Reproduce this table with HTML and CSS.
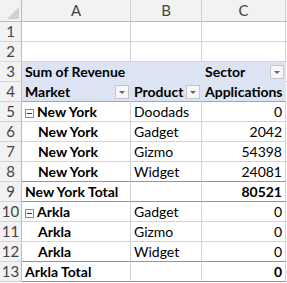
FILE: index.html
```html
<!DOCTYPE html>
<html lang="en">
<head>
    <meta charset="UTF-8">
    <title>Pivot Table</title>
    <link rel="stylesheet" href="styles.css">
</head>
<body>
    <div class="sheet">
        <!-- column headers -->
        <div class="corner"><span class="corner-tri"></span></div>
        <div class="col-head">A</div>
        <div class="col-head">B</div>
        <div class="col-head">C</div>
        <div class="col-head edge"></div>

        <div class="row-head">1</div>
        <div class="cell"></div><div class="cell"></div><div class="cell"></div><div class="cell edge"></div>

        <div class="row-head">2</div>
        <div class="cell"></div><div class="cell"></div><div class="cell"></div><div class="cell edge"></div>

        <div class="row-head">3</div>
        <div class="cell pv-head bold spill">Sum of Revenue</div>
        <div class="cell pv-head"></div>
        <div class="cell pv-head bold split">Sector <span class="drop"></span></div>
        <div class="cell edge"></div>

        <div class="row-head">4</div>
        <div class="cell pv-head pv-last bold split">Market <span class="drop"></span></div>
        <div class="cell pv-head pv-last bold split">Product <span class="drop"></span></div>
        <div class="cell pv-head pv-last bold">Applications</div>
        <div class="cell edge"></div>

        <div class="row-head">5</div>
        <div class="cell bold"><span class="minus"></span>New York</div>
        <div class="cell">Doodads</div>
        <div class="cell num">0</div>
        <div class="cell edge"></div>

        <div class="row-head">6</div>
        <div class="cell bold indent">New York</div>
        <div class="cell">Gadget</div>
        <div class="cell num">2042</div>
        <div class="cell edge"></div>

        <div class="row-head">7</div>
        <div class="cell bold indent">New York</div>
        <div class="cell">Gizmo</div>
        <div class="cell num">54398</div>
        <div class="cell edge"></div>

        <div class="row-head">8</div>
        <div class="cell bold indent before-total">New York</div>
        <div class="cell before-total">Widget</div>
        <div class="cell num before-total">24081</div>
        <div class="cell edge"></div>

        <div class="row-head">9</div>
        <div class="cell bold total">New York Total</div>
        <div class="cell total"></div>
        <div class="cell num bold total">80521</div>
        <div class="cell edge"></div>

        <div class="row-head">10</div>
        <div class="cell bold"><span class="minus"></span>Arkla</div>
        <div class="cell">Gadget</div>
        <div class="cell num">0</div>
        <div class="cell edge"></div>

        <div class="row-head">11</div>
        <div class="cell bold indent">Arkla</div>
        <div class="cell">Gizmo</div>
        <div class="cell num">0</div>
        <div class="cell edge"></div>

        <div class="row-head">12</div>
        <div class="cell bold indent before-total">Arkla</div>
        <div class="cell before-total">Widget</div>
        <div class="cell num before-total">0</div>
        <div class="cell edge"></div>

        <div class="row-head">13</div>
        <div class="cell bold total">Arkla Total</div>
        <div class="cell total"></div>
        <div class="cell num bold total">0</div>
        <div class="cell edge"></div>
    </div>
</body>
</html>
```

FILE: styles.css
```css
body {
    margin: 0;
    background-color: #ffffff;
    font-family: Lato, "Liberation Sans", sans-serif;
    font-size: 14px;
    color: #000;
}
.sheet {
    display: grid;
    grid-template-columns: 22px 109px 71px 84px 1fr;
    grid-template-rows: 22px repeat(13, 20px);
}
.sheet > div {
    box-sizing: border-box;
    border-right: 1px solid #d4d4d4;
    border-bottom: 1px solid #d4d4d4;
    white-space: nowrap;
    overflow: hidden;
}
.sheet > .spill {
    overflow: visible;
    position: relative;
    z-index: 1;
}
.corner {
    background-color: #f2f2f2;
    position: relative;
    border-color: #bdbdbd !important;
}
.corner-tri {
    position: absolute;
    right: 2px;
    bottom: 2px;
    width: 0;
    height: 0;
    border-left: 12px solid transparent;
    border-bottom: 12px solid #d2d2d2;
}
.col-head {
    background-color: #f2f2f2;
    color: #444;
    text-align: center;
    line-height: 21px;
    font-size: 15px;
    border-bottom-color: #bdbdbd !important;
    border-right-color: #d0d0d0 !important;
}
.row-head {
    background-color: #f2f2f2;
    color: #444;
    text-align: center;
    line-height: 19px;
    font-size: 15px;
    border-right-color: #bdbdbd !important;
}
.col-head.edge {
    border-right: none;
}
.cell {
    line-height: 19px;
    padding: 0 3px;
}
.cell.edge {
    border-right: none;
}
.bold {
    font-weight: bold;
}
.num {
    text-align: right;
}
.indent {
    padding-left: 16px;
}
.pv-head {
    background-color: #dce3f3;
    border-right-color: #dce3f3 !important;
    border-bottom-color: #dce3f3 !important;
}
.pv-last {
    border-bottom-color: #8ea9db !important;
}
.split {
    display: flex;
    align-items: center;
    justify-content: space-between;
    padding-right: 1px;
}
.drop {
    width: 14px;
    height: 14px;
    box-sizing: border-box;
    border: 1px solid #c6c6c6;
    background-color: #f7f7f7;
    position: relative;
}
.drop::after {
    content: "";
    position: absolute;
    left: 3px;
    top: 5px;
    border-left: 3px solid transparent;
    border-right: 3px solid transparent;
    border-top: 3px solid #666;
}
.minus {
    display: inline-block;
    width: 9px;
    height: 9px;
    box-sizing: border-box;
    border: 1px solid #8a8a8a;
    margin-right: 3px;
    position: relative;
    vertical-align: -1px;
}
.minus::after {
    content: "";
    position: absolute;
    left: 1px;
    right: 1px;
    top: 3px;
    height: 1px;
    background-color: #333;
}
.before-total {
    border-bottom-color: #7f93d1 !important;
}
.total {
    border-bottom-color: #7f93d1 !important;
}
```
